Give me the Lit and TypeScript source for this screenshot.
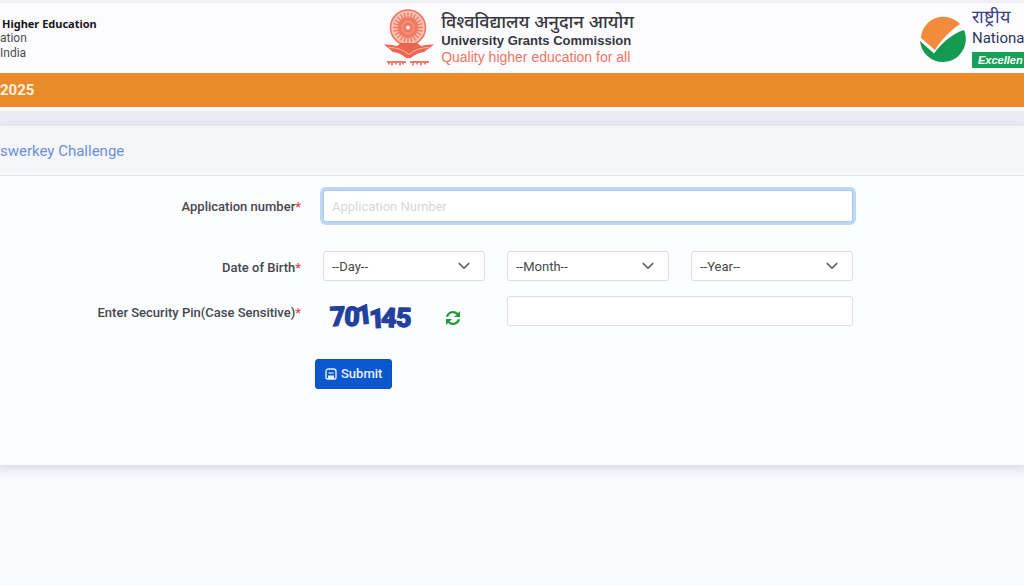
import { LitElement, html, css, svg } from "lit";
import { customElement } from "lit/decorators.js";

const chevron = html`<svg class="chevron" viewBox="0 0 12 8" aria-hidden="true">
  <path d="M1.3 1.5 6 6.2 10.7 1.5" fill="none" stroke="#55585e" stroke-width="1.6" stroke-linecap="round" stroke-linejoin="round" />
</svg>`;

const spokes = Array.from({ length: 24 }, (_, i) => {
  const a = (i * Math.PI) / 12;
  return svg`<line x1=${24 + 6 * Math.cos(a)} y1=${18.5 + 6 * Math.sin(a)} x2=${24 + 15 * Math.cos(a)} y2=${18.5 + 15 * Math.sin(a)} />`;
});

@customElement("app-header")
export class AppHeader extends LitElement {
  static styles = css`
    :host {
      display: block;
      border-top: 3px solid #eef0f2;
      background: #fcfcfe;
      font-family: Roboto, "Liberation Sans", sans-serif;
    }
    .bar {
      display: grid;
      grid-template-columns: 1fr auto 1fr;
      height: 70px;
    }
    .ministry {
      padding-top: 13px;
      font-size: 12px;
      line-height: 15px;
      color: #4c4c50;
    }
    .ministry strong {
      display: block;
      padding-left: 2px;
      font-family: "Noto Sans", Roboto, sans-serif;
      font-size: 11px;
      color: #16161a;
    }
    .ministry span {
      display: block;
    }
    .ugc {
      display: flex;
      gap: 7px;
      padding: 6px 6px 0 0;
    }
    .emblem {
      width: 50px;
      height: 58px;
    }
    .lines {
      font-family: "Liberation Sans", "Noto Sans", sans-serif;
      font-size: 13px;
      line-height: 17px;
      white-space: nowrap;
      padding-top: 5px;
    }
    .hindi {
      font-size: 18px;
      font-weight: 500;
      color: #38383e;
    }
    .name {
      padding-top: 1px;
      font-weight: 700;
      color: #34363e;
    }
    .motto {
      color: #ee7560;
      font-size: 14px;
    }
    .nta {
      justify-self: end;
      display: flex;
      gap: 6px;
      padding-top: 4px;
      width: 104px;
    }
    .mark {
      flex: none;
      width: 46px;
      height: 46px;
      margin-top: 9px;
    }
    .agency {
      flex: 1;
      color: #30345c;
      white-space: nowrap;
    }
    .agency .top {
      font-size: 18px;
      line-height: 20px;
      font-weight: 500;
      color: #3b3f86;
    }
    .agency .mid {
      padding-top: 2px;
      font-size: 15px;
      line-height: 18px;
    }
    .agency .tag {
      margin-top: 5px;
      padding-left: 6px;
      background: #18a058;
      color: #fff;
      font: italic 700 11px/16px "Liberation Sans", sans-serif;
    }
  `;

  render() {
    return html`<header class="bar">
      <div class="ministry"><strong>Higher Education</strong><span>ation</span><span>India</span></div>
      <div class="ugc">
        <svg class="emblem" viewBox="0 0 50 58" aria-hidden="true">
          <circle cx="24" cy="18.5" r="17.5" fill="#f9c1b2" stroke="#ee7862" stroke-width="1.6" />
          <g stroke="#ee7862" stroke-width="1.3">${spokes}</g>
          <circle cx="24" cy="18.5" r="10.5" fill="#f07a62" />
          <circle cx="24" cy="18.5" r="6" fill="none" stroke="#f8b3a2" stroke-width="0.8" />
          <circle cx="24" cy="18.5" r="2" fill="#fff3ee" />
          <path d="M0 35.5 Q7 35 13 37 L17 34H33L37 37Q43 35 50 35.500 L40 43 Q32 44 27 49 H22 Q17 44 9 43Z" fill="#ec654e" />
          <path d="M5 38.5Q17 38.5 25 45.5Q33 38.5 45 38.5" fill="none" stroke="#fbd0c5" stroke-width="0.8" />
          <path d="M3 53h19M26 53h19M5 55.5v-2m3 3v-3m4 2v-2m4 3v-3m3 2v-2m10 3v-3m4 2v-2m4 3v-3m4 2v-2" fill="none" stroke="#ee7b66" stroke-width="1.8" />
        </svg>
        <div class="lines">
          <div class="hindi" lang="hi">विश्वविद्यालय अनुदान आयोग</div>
          <div class="name">University Grants Commission</div>
          <div class="motto">Quality higher education for all</div>
        </div>
      </div>
      <div class="nta">
        <svg class="mark" viewBox="0 0 46 46" aria-hidden="true">
          <path d="M1 22A22.500 22.500 0 0 1 40 8C30 15 21 24 15 34L1 22Z" fill="#f28b3c" />
          <path d="M0 25L14 37.500C20 29 31 18 44 14A23 23 0 0 1 23 46A23 23 0 0 1 0 25Z" fill="#159a52" />
        </svg>
        <div class="agency">
          <div class="top" lang="hi">राष्ट्रीय</div>
          <div class="mid">Nationa</div>
          <div class="tag">Excellen</div>
        </div>
      </div>
    </header>`;
  }
}

@customElement("challenge-form")
export class ChallengeForm extends LitElement {
  static styles = css`
    :host {
      display: block;
      font-family: Roboto, "Liberation Sans", sans-serif;
      font-size: 13px;
      color: #45474c;
    }
    .card {
      background: #fcfdff;
      box-shadow: 0 2px 8px 2px #d9dae8;
    }
    .title {
      margin: 0;
      height: 49px;
      display: flex;
      align-items: center;
      background: #f4f6f8;
      border-bottom: 1px solid #e6e8eb;
      color: #6c8fdc;
      font-size: 15px;
      font-weight: 400;
    }
    form {
      padding: 14px 0 76px;
    }
    .row {
      display: grid;
      grid-template-columns: 301px repeat(3, minmax(0, 1fr)) 149px;
      column-gap: 22px;
    }
    .row.number {
      margin-bottom: 29px;
    }
    .row.birth {
      margin-bottom: 15px;
    }
    .label {
      padding-top: 7px;
      text-align: right;
      font-weight: 500;
      line-height: 20px;
      white-space: nowrap;
    }
    .star {
      color: #e5434d;
    }
    input,
    select {
      box-sizing: border-box;
      width: 100%;
      height: 30px;
      padding: 0 8px;
      border: 1px solid #dcdee2;
      border-radius: 3px;
      background: #fff;
      color: #45474c;
      font: inherit;
      outline: none;
      appearance: none;
    }
    .wide {
      grid-column: 2 / 5;
      height: 32px;
      border-color: #a6cbf6;
      box-shadow: 0 0 0 3px #bdd7f5;
    }
    .wide::placeholder {
      color: #d5d8dc;
      opacity: 1;
    }
    .pick {
      position: relative;
      height: 30px;
    }
    .chevron {
      position: absolute;
      right: 15px;
      top: 11px;
      width: 12px;
      height: 8px;
      pointer-events: none;
    }
    .captcha {
      display: flex;
      align-items: center;
      gap: 32px;
      height: 44px;
    }
    .code {
      width: 84px;
      height: 34px;
      margin-left: 6px;
      font-family: Roboto, "DejaVu Sans", sans-serif;
      font-weight: 900;
      font-size: 27px;
      fill: #23409f;
      stroke: #23409f;
      stroke-width: 1px;
    }
    .refresh {
      padding: 0;
      border: 0;
      background: none;
      line-height: 0;
      cursor: pointer;
    }
    .refresh svg {
      width: 16px;
      height: 16px;
    }
    .pin {
      grid-column: 3 / 5;
    }
    .actions {
      padding: 19px 0 0 315px;
    }
    .submit {
      display: flex;
      align-items: center;
      gap: 4px;
      height: 30px;
      padding: 0 9px;
      border: 1px solid #0b50bd;
      border-radius: 3px;
      background: #0b57d0;
      color: #e8f0ff;
      font: 500 13px/20px Roboto, sans-serif;
      cursor: pointer;
    }
    .submit svg {
      width: 12px;
      height: 12px;
    }
  `;

  private glyphs = [
    { c: "7", x: 1, y: 25, r: -3 },
    { c: "0", x: 15, y: 25, r: 3 },
    { c: "1", x: 28, y: 23, r: -6 },
    { c: "1", x: 40, y: 27, r: -3 },
    { c: "4", x: 52, y: 26, r: 4 },
    { c: "5", x: 67, y: 26, r: 2 },
  ];

  private picker(id: string, name: string) {
    return html`<div class="pick">
      <select id=${id} aria-label=${name}><option>--${name}--</option></select>${chevron}
    </div>`;
  }

  render() {
    return html`<section class="card">
      <h2 class="title">swerkey Challenge</h2>
      <form @submit=${(e: Event) => e.preventDefault()}>
        <div class="row number">
          <label class="label" for="application">Application number<span class="star">*</span></label>
          <input class="wide" id="application" placeholder="Application Number" />
        </div>
        <div class="row birth">
          <label class="label" for="day">Date of Birth<span class="star">*</span></label>
          ${this.picker("day", "Day")}${this.picker("month", "Month")}${this.picker("year", "Year")}
        </div>
        <div class="row">
          <label class="label" for="pin">Enter Security Pin(Case Sensitive)<span class="star">*</span></label>
          <div class="captcha">
            <svg class="code" viewBox="0 0 84 34" role="img" aria-label="Security pin">
              ${this.glyphs.map((g) => svg`<text x=${g.x} y=${g.y} transform=${`rotate(${g.r} ${g.x + 7} 18)`}>${g.c}</text>`)}
            </svg>
            <button class="refresh" type="button" aria-label="Refresh">
              <svg viewBox="0 0 16 16" aria-hidden="true">
                <path d="M2 6.800A6.200 6.200 0 0 1 12.500 4M14 9.200A6.200 6.200 0 0 1 3.500 12" fill="none" stroke="#26983a" stroke-width="2.200" />
                <path d="M15 1v6H9ZM1 15V9h6Z" fill="#26983a" />
              </svg>
            </button>
          </div>
          <input class="pin" id="pin" />
        </div>
        <div class="actions">
          <button class="submit" type="submit">
            <svg viewBox="0 0 12 12" aria-hidden="true">
              <path d="M1 3.500Q1 1 3.500 1H8.500Q11 1 11 3.500V9.500Q11 11 9.500 11H2.500Q1 11 1 9.500Z" fill="none" stroke="#e8f0ff" stroke-width="1.400" />
              <path d="M3.500 5H8.500" fill="none" stroke="#e8f0ff" stroke-width="1.200" />
              <path d="M3 11V7.500H9V11Z" fill="#e8f0ff" />
            </svg>
            Submit
          </button>
        </div>
      </form>
    </section>`;
  }
}

@customElement("app-root")
export class AppRoot extends LitElement {
  static styles = css`
    :host {
      display: block;
      min-height: 100vh;
      overflow: hidden;
      background: #f8f9fd;
    }
    .banner {
      height: 34px;
      background: #eb8a29;
      border-bottom: 4px solid #fafafc;
      color: #fff3e4;
      font: 700 15px/34px Roboto, sans-serif;
    }
    .gap {
      height: 15px;
      background: #e9ecf3;
    }
  `;

  render() {
    return html`<app-header></app-header>
      <div class="banner">2025</div>
      <div class="gap"></div>
      <challenge-form></challenge-form>`;
  }
}
